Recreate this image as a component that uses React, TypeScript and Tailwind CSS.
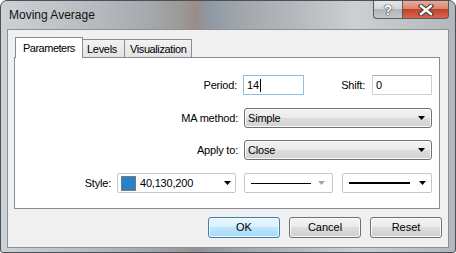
import React from 'react';

// Moving Average dialog, Windows 7 basic look
const Arrow = ({ color = '#000' }: { color?: string }) => (
  <svg width="7" height="4" viewBox="0 0 7 4" className="shrink-0">
    <path d="M0 0h7L3.5 4z" fill={color} />
  </svg>
);

const Label = ({ children, className = '' }: { children: React.ReactNode; className?: string }) => (
  <span className={`text-[11px] leading-[13px] tracking-[-0.2px] text-black ${className}`}>{children}</span>
);

const Combo = ({ value, width }: { value: string; width: string }) => (
  <div
    className={`${width} h-[20px] rounded-[3px] border border-[#707070] bg-[linear-gradient(#f3f3f3_0%,#e9e9e9_50%,#dddddd_50%,#d2d2d2_100%)] flex items-center justify-between pl-[3px] pr-[6px] shadow-[inset_0_0_0_1px_#fbfbfb]`}
  >
    <span className="text-[11px] tracking-[-0.2px] text-black">{value}</span>
    <Arrow />
  </div>
);

const Button = ({ label, primary }: { label: string; primary?: boolean }) => (
  <div
    className={
      primary
        ? 'w-[72px] h-[21px] rounded-[3px] border border-[#3c7fb1] bg-[linear-gradient(#eaf6fd_0%,#d9f0fc_50%,#bee6fd_50%,#a7d9f5_100%)] shadow-[inset_0_0_0_1px_#f4fbff] flex items-center justify-center text-[11px] text-black'
        : 'w-[72px] h-[21px] rounded-[3px] border border-[#707070] bg-[linear-gradient(#f2f2f2_0%,#ebebeb_50%,#dddddd_50%,#cfcfcf_100%)] shadow-[inset_0_0_0_1px_#fafafa] flex items-center justify-center text-[11px] text-black'
    }
  >
    {label}
  </div>
);

export default function App() {
  return (
    <div className="w-[456px] h-[253px] font-['Liberation_Sans',Arial,sans-serif]">
      <div className="w-full h-full flex flex-col rounded-t-[7px] rounded-b-[3px] border border-[#4b5056] bg-[linear-gradient(90deg,#cdd1d5_0%,#babec2_18%,#a6aaae_32%,#9c9895_40%,#9b8c88_43%,#8f9aa6_46%,#a4a8ac_54%,#b7bbbf_66%,#cdcfd1_78%,#c2c5c8_88%,#b3b7bb_100%)]">
        {/* title bar */}
        <div className="h-[28px] flex items-start shrink-0">
          <span className="pl-[8px] pt-[6px] text-[12px] leading-[16px] text-[#111]">Moving Average</span>
          <div className="ml-auto mr-[6px] flex">
            <div className="w-[29px] h-[18px] border-l border-b border-[#565a5f] rounded-bl-[4px] bg-[linear-gradient(#e4e7ea_0%,#d2d6da_45%,#b0b5ba_50%,#c4c8cc_100%)] flex items-center justify-center">
              <span className="text-[14px] font-bold leading-none text-white [text-shadow:0_0_1px_#333,0_0_1px_#333,0_0_1px_#333]">?</span>
            </div>
            <div className="w-[47px] h-[18px] border-l border-r border-b border-[#565a5f] rounded-br-[4px] bg-[linear-gradient(#e8ab9c_0%,#d88671_45%,#c3432a_50%,#d5664c_100%)] flex items-center justify-center">
              <svg width="16" height="12" viewBox="0 0 16 12">
                <path d="M3 2L13 10M13 2L3 10" stroke="#3a3a3a" strokeWidth="4.5" strokeLinecap="square" />
                <path d="M3 2L13 10M13 2L3 10" stroke="#fff" strokeWidth="2.4" strokeLinecap="square" />
              </svg>
            </div>
          </div>
        </div>

        {/* client area */}
        <div className="mx-[6px] mb-[4px] flex-1 border border-[#8d9196] bg-[#f0f0f0] flex flex-col pt-[7px] pl-[6px] pr-[8px]">
          {/* tabs */}
          <div className="h-[21px] flex items-end relative z-10 pl-[1px]">
            <div className="w-[68px] h-[21px] border-l border-t border-r border-[#898c95] bg-white flex items-center pl-[7px] text-[11px] tracking-[-0.5px] text-black">
              Parameters
            </div>
            <div className="w-[42px] h-[19px] border-t border-r border-b border-[#898c95] bg-[linear-gradient(#f2f2f2,#e3e3e3)] flex items-center pl-[4px] pt-[1px] text-[11px] tracking-[-0.3px] text-black">
              Levels
            </div>
            <div className="w-[67px] h-[19px] border-t border-r border-b border-[#898c95] bg-[linear-gradient(#f2f2f2,#e3e3e3)] flex items-center pl-[5px] pt-[1px] text-[11px] tracking-[-0.4px] text-black">
              Visualization
            </div>
          </div>

          {/* panel */}
          <div className="-mt-px h-[152px] border border-[#898c95] bg-white flex flex-col pt-[17px] pr-[7px]">
            <div className="h-[20px] flex items-center justify-end">
              <Label>Period:</Label>
              <div className="ml-[6px] w-[61px] h-[20px] border border-[#8fbde3] flex items-center pl-[3px]">
                <span className="text-[11px] text-black">14</span>
                <span className="ml-[1px] w-px h-[13px] bg-black" />
              </div>
              <Label className="w-[61px] text-right">Shift:</Label>
              <div className="ml-[7px] w-[60px] h-[20px] border border-[#c9d0d8] border-t-[#abadb3] flex items-center pl-[3px]">
                <span className="text-[11px] text-black">0</span>
              </div>
            </div>

            <div className="mt-[13px] h-[20px] flex items-center justify-end">
              <Label>MA method:</Label>
              <div className="ml-[6px]">
                <Combo value="Simple" width="w-[188px]" />
              </div>
            </div>

            <div className="mt-[12px] h-[20px] flex items-center justify-end">
              <Label>Apply to:</Label>
              <div className="ml-[6px]">
                <Combo value="Close" width="w-[188px]" />
              </div>
            </div>

            <div className="mt-[13px] h-[20px] flex items-center justify-end">
              <Label>Style:</Label>
              <div className="ml-[6px] w-[119px] h-[20px] rounded-[2px] border border-[#c6c6c6] bg-white flex items-center pl-[3px] pr-[4px]">
                <div className="w-[15px] h-[15px] border border-[#7a7a7a] bg-[#2882c8] shrink-0" />
                <span className="ml-[4px] text-[11px] tracking-[-0.2px] text-black">40,130,200</span>
                <div className="ml-auto">
                  <Arrow />
                </div>
              </div>
              <div className="ml-[8px] w-[89px] h-[20px] rounded-[2px] border border-[#c6c6c6] bg-white flex items-center pl-[6px] pr-[7px]">
                <div className="w-[60px] h-px bg-black" />
                <div className="ml-auto">
                  <Arrow color="#a6a6a6" />
                </div>
              </div>
              <div className="ml-[9px] w-[90px] h-[20px] rounded-[2px] border border-[#c6c6c6] bg-white flex items-center pl-[6px] pr-[5px]">
                <div className="w-[61px] h-[2px] bg-black" />
                <div className="ml-auto">
                  <Arrow />
                </div>
              </div>
            </div>
          </div>

          {/* buttons */}
          <div className="mt-[8px] flex justify-end gap-[9px] -mr-[2px]">
            <Button label="OK" primary />
            <Button label="Cancel" />
            <Button label="Reset" />
          </div>
        </div>
      </div>
    </div>
  );
}
